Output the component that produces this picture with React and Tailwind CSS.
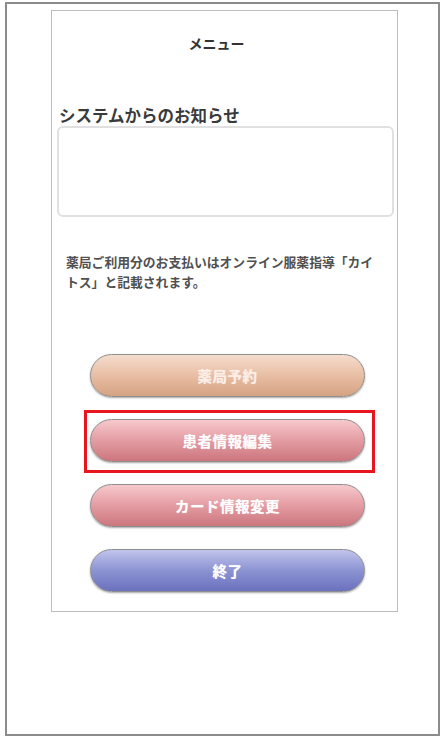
import React from "react";

const buttons = [
  {
    label: "薬局予約",
    cls: "bg-linear-to-b from-[#f5dccd] via-[#e8bea4] to-[#d5a283] text-[#fbeee6]",
  },
  {
    label: "患者情報編集",
    cls: "bg-linear-to-b from-[#f6c9cc] via-[#e39ca2] to-[#cc767e] text-white",
    highlight: true,
  },
  {
    label: "カード情報変更",
    cls: "bg-linear-to-b from-[#f6c9cc] via-[#e39ca2] to-[#cc767e] text-white",
  },
  {
    label: "終了",
    cls: "bg-linear-to-b from-[#c1c4ec] via-[#8c93d2] to-[#6b71bd] text-white",
  },
];

const MenuButton = ({ label, cls }) => {
  return (
    <div
      className={
        "w-[275px] h-[43px] rounded-full border border-[#8f8f8f] shadow-[0_1px_2px_rgba(0,0,0,0.35)] flex items-center justify-center font-bold text-[14.5px] tracking-[0.5px] [text-shadow:0_0_1px_rgba(255,255,255,0.6)] " +
        cls
      }
    >
      {label}
    </div>
  );
};

const App = () => {
  return (
    <div className="w-[448px] h-[740px] bg-white pt-[2px] pl-[5px] font-['Noto_Sans_CJK_JP',sans-serif]">
      <div className="w-[435px] h-[734px] border-2 border-[#8c8c8c] pt-[6px] pl-[44px]">
        <div className="w-[347px] h-[602px] border border-[#bdbdbd] flex flex-col">
          {/* title */}
          <div className="mt-[22px] h-[20px] leading-[20px] text-center text-[14px] font-bold text-[#333] pr-[16px]">
            メニュー
          </div>

          {/* notice */}
          <div className="mt-[51px] ml-[7px] h-[22px] leading-[22px] text-[16.5px] font-bold text-[#3a3a3a]">
            システムからのお知らせ
          </div>
          <div className="ml-[5px] w-[337px] h-[91px] rounded-[6px] border-2 border-[#e0e0e0]"></div>

          <p className="mt-[35px] pl-[14px] pr-[16px] text-[12.8px] leading-[20px] font-bold text-[#505050]">
            薬局ご利用分のお支払いはオンライン服薬指導「カイトス」と記載されます。
          </p>

          {/* buttons */}
          <div className="mt-[62px] flex flex-col items-start">
            <div className="ml-[38px]">
              <MenuButton {...buttons[0]} />
            </div>
            <div className="mt-[13px] ml-[32px] border-[3px] border-[#e8141e] pt-[6px] pb-[8px] pl-[3px] pr-[7px]">
              <MenuButton {...buttons[1]} />
            </div>
            <div className="mt-[11px] ml-[38px]">
              <MenuButton {...buttons[2]} />
            </div>
            <div className="mt-[22px] ml-[38px]">
              <MenuButton {...buttons[3]} />
            </div>
          </div>
        </div>
      </div>
    </div>
  );
};

export default App;
